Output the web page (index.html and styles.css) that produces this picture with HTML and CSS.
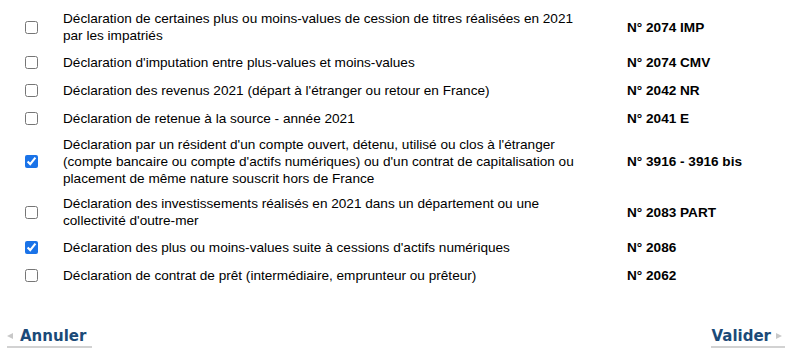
FILE: index.html
```html
<!DOCTYPE html>
<html lang="fr">
<head>
<meta charset="utf-8">
<link rel="stylesheet" href="styles.css">
</head>
<body>
<div class="page">
<table class="forms">
  <tr>
    <td class="c-box"><input type="checkbox"></td>
    <td class="c-label">Déclaration de certaines plus ou moins-values de cession de titres réalisées en 2021 par les impatriés</td>
    <td class="c-code">N° 2074 IMP</td>
  </tr>
  <tr>
    <td class="c-box"><input type="checkbox"></td>
    <td class="c-label">Déclaration d'imputation entre plus-values et moins-values</td>
    <td class="c-code">N° 2074 CMV</td>
  </tr>
  <tr>
    <td class="c-box"><input type="checkbox"></td>
    <td class="c-label">Déclaration des revenus 2021 (départ à l'étranger ou retour en France)</td>
    <td class="c-code">N° 2042 NR</td>
  </tr>
  <tr>
    <td class="c-box"><input type="checkbox"></td>
    <td class="c-label">Déclaration de retenue à la source - année 2021</td>
    <td class="c-code">N° 2041 E</td>
  </tr>
  <tr>
    <td class="c-box"><input type="checkbox" checked></td>
    <td class="c-label">Déclaration par un résident d'un compte ouvert, détenu, utilisé ou clos à l'étranger (compte bancaire ou compte d'actifs numériques) ou d'un contrat de capitalisation ou placement de même nature souscrit hors de France</td>
    <td class="c-code">N° 3916 - 3916 bis</td>
  </tr>
  <tr>
    <td class="c-box"><input type="checkbox"></td>
    <td class="c-label">Déclaration des investissements réalisés en 2021 dans un département ou une collectivité d'outre-mer</td>
    <td class="c-code">N° 2083 PART</td>
  </tr>
  <tr>
    <td class="c-box"><input type="checkbox" checked></td>
    <td class="c-label">Déclaration des plus ou moins-values suite à cessions d'actifs numériques</td>
    <td class="c-code">N° 2086</td>
  </tr>
  <tr>
    <td class="c-box"><input type="checkbox"></td>
    <td class="c-label">Déclaration de contrat de prêt (intermédiaire, emprunteur ou prêteur)</td>
    <td class="c-code">N° 2062</td>
  </tr>
</table>
<div class="actions">
  <a class="btn btn-prev" href="#"><span class="tri tri-left"></span>Annuler</a>
  <a class="btn btn-next" href="#">Valider<span class="tri tri-right"></span></a>
</div>
</div>
</body>
</html>
```

FILE: styles.css
```css
html, body {
  margin: 0;
  padding: 0;
  background: #ffffff;
}
.page {
  width: 808px;
  height: 352px;
  padding: 6px 8px 0 8px;
  box-sizing: border-box;
  font-family: "Liberation Sans", Arial, sans-serif;
  font-size: 13.6px;
  color: #000;
  overflow: hidden;
}
.forms {
  border-collapse: collapse;
  width: 792px;
  table-layout: fixed;
}
.forms td {
  padding: 4px 0;
  height: 20px;
  line-height: 17px;
  vertical-align: middle;
}
.c-box {
  width: 38px;
  padding-left: 17px !important;
}
.c-box input {
  margin: 0;
  width: 13px;
  height: 13px;
  display: block;
  accent-color: #1a73e8;
}
.c-label {
  width: 515px;
  padding-right: 49px !important;
}
.c-code {
  font-weight: bold;
}
.actions {
  display: flex;
  justify-content: space-between;
  margin-top: 38px;
  padding: 0 15px 0 0;
}
.btn {
  display: flex;
  align-items: center;
  font-family: "DejaVu Sans", Verdana, sans-serif;
  font-weight: bold;
  font-size: 15px;
  color: #1b4a78;
  text-decoration: none;
  line-height: 18px;
  padding-bottom: 1px;
  border-bottom: 2px solid #d2d2d2;
}
.btn-prev {
  margin-left: -1px;
  padding-right: 6px;
}
.btn-next {
  padding-right: 3px;
}
.tri {
  display: inline-block;
  width: 0;
  height: 0;
  border-top: 3.5px solid transparent;
  border-bottom: 3.5px solid transparent;
}
.tri-left {
  border-right: 6px solid #c8c8c8;
  margin-right: 7px;
}
.tri-right {
  border-left: 6px solid #c8c8c8;
  margin-left: 5px;
}
```
